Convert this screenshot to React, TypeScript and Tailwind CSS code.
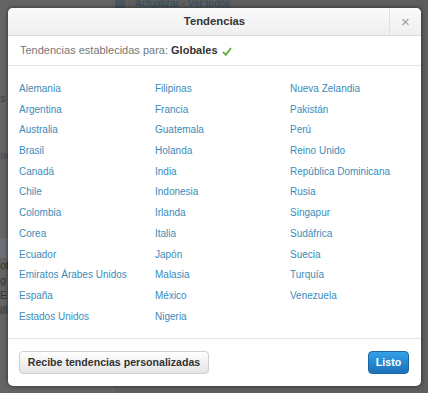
import React from "react";

const col1 = ["Alemania","Argentina","Australia","Brasil","Canadá","Chile","Colombia","Corea","Ecuador","Emiratos Árabes Unidos","España","Estados Unidos"];
const col2 = ["Filipinas","Francia","Guatemala","Holanda","India","Indonesia","Irlanda","Italia","Japón","Malasia","México","Nigeria"];
const col3 = ["Nueva Zelandia","Pakistán","Perú","Reino Unido","República Dominicana","Rusia","Singapur","Sudáfrica","Suecia","Turquía","Venezuela"];

function Col({ items }: { items: string[] }) {
  return (
    <div className="flex flex-col">
      {items.map((c) => (
        <a key={c} className="block h-[20.7px] leading-[20.7px] text-[10px] text-[#3a8cb9] whitespace-nowrap cursor-pointer">
          {c}
        </a>
      ))}
    </div>
  );
}

export default function App() {
  return (
    <div className="relative w-[428px] h-[393px] overflow-hidden bg-[#5e5e5e]" style={{ fontFamily: '"Liberation Sans", Arial, sans-serif' }}>
      {/* dimmed page behind */}
      <div className="flex h-full">
        <div className="w-[115px] h-full bg-[#646464] flex flex-col text-[11px] text-[#3b3b3b]">
          <div className="h-[90px]" />
          <div className="text-[#3f3f3f]">s</div>
          <div className="h-[40px]" />
          <div className="text-[#3d4c5a]">ac</div>
          <div className="h-[75px]" />
          <div className="h-[20px] bg-[#6b6f73]" />
          <div className="text-[#333] leading-[15px]">ot<br />g<br />En<br />ill</div>
        </div>
        <div className="flex-1 flex flex-col">
          <div className="flex items-start gap-[10px] h-[8px]">
            <div className="w-[10px] h-[8px] bg-[#4a5560]" />
            <div className="text-[10px] leading-[8px] text-[#2f4a60]">Actualizar · Ver todos</div>
          </div>
        </div>
      </div>

      {/* modal */}
      <div className="absolute left-[8px] top-[8px] w-[413px] h-[378px] bg-white rounded-[5px] shadow-[0_0_4px_rgba(0,0,0,0.6)] flex flex-col overflow-hidden">
        <div className="h-[28px] flex items-stretch border-b border-[#dcdcdc] bg-gradient-to-b from-[#fafafa] to-[#efefef]">
          <div className="flex-1 flex items-center justify-center pl-[32px] text-[11.3px] font-bold text-[#333]">Tendencias</div>
          <div className="w-[32px] border-l border-[#e0e0e0] flex items-center justify-center text-[#9a9a9a] text-[15px] leading-none">×</div>
        </div>
        <div className="h-[30px] flex items-center pl-[12px] border-b border-[#e6e6e6] text-[11px] text-[#777]">
          <span>Tendencias establecidas para:&nbsp;</span>
          <span className="font-bold text-[#333]">Globales</span>
          <svg className="ml-[4px] mt-[2px]" width="10" height="9" viewBox="0 0 10 9">
            <path d="M1 5 L3.8 7.8 L9 1" fill="none" stroke="#5aae3c" strokeWidth="1.8" />
          </svg>
        </div>
        <div className="grid grid-cols-[136px_135px_1fr] pl-[11px] pt-[13px] pb-[11px] border-b border-[#e6e6e6]">
          <Col items={col1} />
          <Col items={col2} />
          <Col items={col3} />
        </div>
        <div className="flex-1 flex items-center justify-between pl-[11px] pr-[12px]">
          <button className="h-[23px] w-[190px] rounded-[4px] border border-[#cfcfcf] bg-gradient-to-b from-[#ffffff] to-[#e4e4e4] text-[10.6px] font-bold text-[#333] shadow-[inset_0_1px_0_#fff]">
            Recibe tendencias personalizadas
          </button>
          <button className="h-[23px] w-[41px] rounded-[4px] border border-[#1c66a8] bg-gradient-to-b from-[#34a1e6] to-[#1d71ba] text-[10.6px] font-bold text-white">
            Listo
          </button>
        </div>
      </div>
    </div>
  );
}
